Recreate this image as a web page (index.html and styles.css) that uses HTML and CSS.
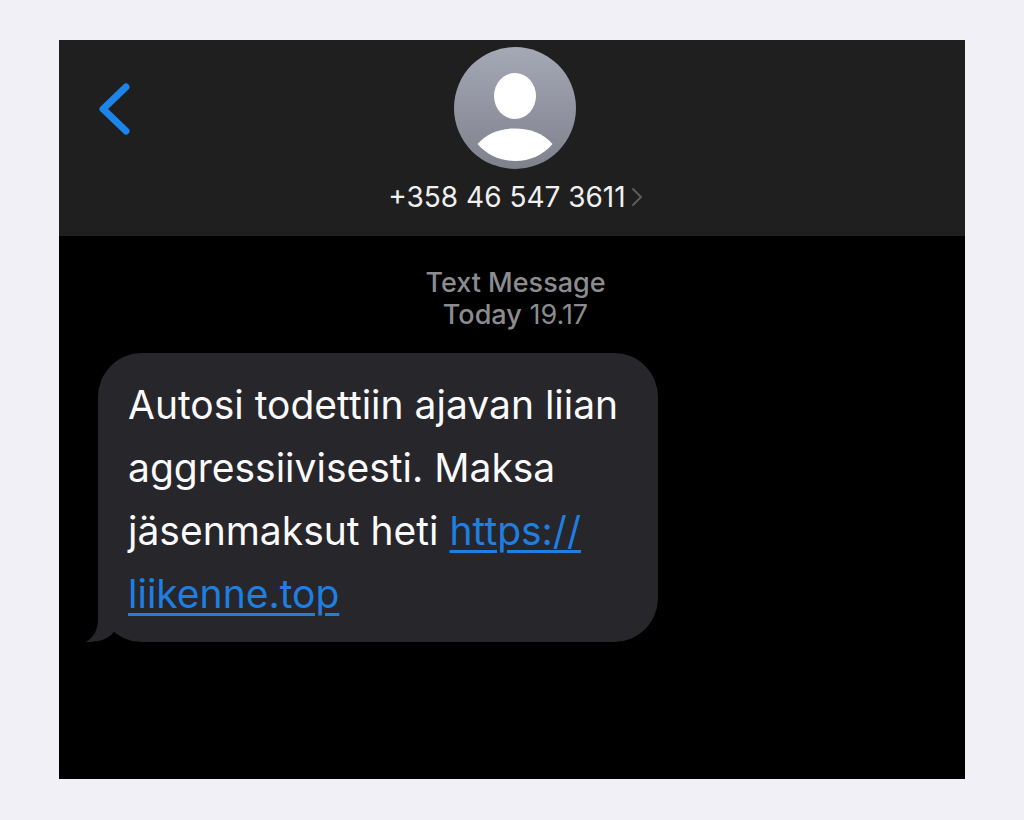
FILE: index.html
```html
<!DOCTYPE html>
<html lang="fi">
<head>
<meta charset="utf-8">
<title>+358 46 547 3611</title>
<meta name="viewport" content="width=device-width, initial-scale=1">
<link rel="stylesheet" href="styles.css">
</head>
<body>
<div class="phone">
<header class="topbar">
<button class="back" type="button" aria-label="Back">
<svg width="34" height="54" viewBox="0 0 34 54"><path d="M28 5L5 27L28 49" fill="none" stroke="#1b85ea" stroke-width="7" stroke-linecap="round" stroke-linejoin="round"/></svg>
</button>
<a class="contact" href="#">
<svg class="avatar" width="122" height="122" viewBox="0 0 122 122">
<defs>
<linearGradient id="shade" x1="0" y1="0" x2="0" y2="1">
<stop offset="0" stop-color="#a5a8b5"/>
<stop offset="1" stop-color="#7f818d"/>
</linearGradient>
</defs>
<circle cx="61" cy="61" r="61" fill="url(#shade)"/>
<ellipse cx="61" cy="49" rx="21" ry="23" fill="#fff"/>
<path d="M23.500 97C33 86 46 81.500 61 81.500S89 86 98.500 97C89 108 76 114 61 114S33 108 23.500 97Z" fill="#fff"/>
</svg>
<span class="number">+358 46 547 3611
<svg width="12" height="20" viewBox="0 0 12 20"><path d="M2 2L10 10L2 18" fill="none" stroke="#5c5c5f" stroke-width="2" stroke-linecap="round"/></svg>
</span>
</a>
</header>
<main class="thread">
<p class="stamp"><b>Text Message</b><br><b>Today</b> 19.17</p>
<div class="bubble">
<svg class="tail" width="40" height="50" viewBox="0 0 40 50"><path d="M13 0V26C13 38 9 45 1 50C12 50 22 48 28 41L40 20V0Z" fill="#27262b"/></svg>
<p>Autosi todettiin ajavan liian aggressiivisesti. Maksa jäsenmaksut heti <a href="#">https://<wbr>liikenne.top</a></p>
</div>
</main>
</div>
</body>
</html>
```

FILE: styles.css
```css
*{box-sizing:border-box;}
body{margin:0;min-height:100vh;display:flex;padding:40px 59px 41px;background-color:#f0f0f6;color:#fafafc;font-family:Inter,"Liberation Sans",sans-serif;}
p{margin:0;}
svg{display:block;}
.phone{flex:1;display:flex;flex-direction:column;background-color:#000000;}
.topbar{display:grid;grid-template-columns:1fr auto 1fr;align-items:start;padding:7px 32px 23px 39px;background-color:#1f1f1f;}
.back{justify-self:start;margin-top:35px;padding:0;border:0;background:none;cursor:pointer;}
.contact{display:flex;flex-direction:column;align-items:center;gap:12px;color:#f0f0f0;text-decoration:none;}
.number{display:flex;align-items:center;gap:5px;font-size:28px;line-height:32px;}
.thread{flex:1;padding:31px 32px 40px 39px;}
.stamp{margin-bottom:22px;color:#8c8c90;font-size:27px;line-height:32px;text-align:center;}
.stamp b{font-weight:500;}
.bubble{position:relative;width:560px;max-width:100%;padding:20px 30px 17px;border-radius:44px;background-color:#27262b;font-size:39px;line-height:63px;}
.bubble a{color:#1e7fe0;text-decoration:underline;text-decoration-thickness:3px;text-underline-offset:5px;}
.tail{position:absolute;left:-13px;bottom:0;}
```
